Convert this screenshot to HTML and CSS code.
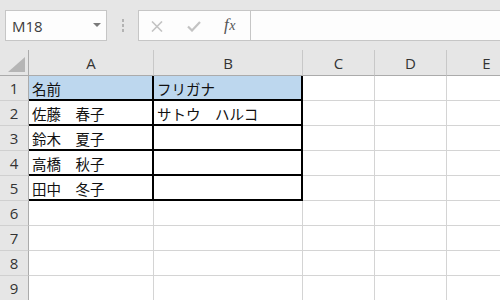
FILE: index.html
```html
<!DOCTYPE html>
<html lang="ja">
<head>
<meta charset="utf-8">
<link rel="stylesheet" href="styles.css">
</head>
<body>
<div class="app">
  <div class="toolbar">
    <div class="namebox">
      <span class="nametext">M18</span>
      <span class="caret"></span>
    </div>
    <div class="grip"><i></i><i></i><i></i></div>
    <div class="fbuttons">
      <svg class="ic-x" width="12" height="11" viewBox="0 0 12 11"><path d="M1 0.5 L11 10.5 M11 0.5 L1 10.5" stroke="#c3c3c3" stroke-width="1.6" fill="none"/></svg>
      <svg class="ic-ok" width="14" height="11" viewBox="0 0 14 11"><path d="M1 5.5 L5 9.5 L13 1" stroke="#c3c3c3" stroke-width="2.2" fill="none"/></svg>
      <span class="fx">f<span class="fxx">x</span></span>
    </div>
    <div class="finput"></div>
  </div>
  <div class="sheet">
    <div class="corner"><svg width="28" height="25" viewBox="0 0 28 25"><polygon points="25,7 25,22 8,22" fill="#b5b5b5"/></svg></div>
    <div class="ch">A</div><div class="ch">B</div><div class="ch">C</div><div class="ch">D</div><div class="ch">E</div>

    <div class="rh">1</div><div class="c hl bd">名前</div><div class="c hl bd">フリガナ</div><div class="c"></div><div class="c"></div><div class="c"></div>
    <div class="rh">2</div><div class="c bd">佐藤　春子</div><div class="c bd">サトウ　ハルコ</div><div class="c"></div><div class="c"></div><div class="c"></div>
    <div class="rh">3</div><div class="c bd">鈴木　夏子</div><div class="c bd"></div><div class="c"></div><div class="c"></div><div class="c"></div>
    <div class="rh">4</div><div class="c bd">高橋　秋子</div><div class="c bd"></div><div class="c"></div><div class="c"></div><div class="c"></div>
    <div class="rh">5</div><div class="c bd">田中　冬子</div><div class="c bd"></div><div class="c"></div><div class="c"></div><div class="c"></div>
    <div class="rh">6</div><div class="c"></div><div class="c"></div><div class="c"></div><div class="c"></div><div class="c"></div>
    <div class="rh">7</div><div class="c"></div><div class="c"></div><div class="c"></div><div class="c"></div><div class="c"></div>
    <div class="rh">8</div><div class="c"></div><div class="c"></div><div class="c"></div><div class="c"></div><div class="c"></div>
    <div class="rh">9</div><div class="c"></div><div class="c"></div><div class="c"></div><div class="c"></div><div class="c"></div>
  </div>
</div>
</body>
</html>
```
FILE: styles.css
```css
* { box-sizing: border-box; }
html, body { margin: 0; padding: 0; }
body {
  width: 500px;
  height: 300px;
  overflow: hidden;
  background: #e6e6e6;
  font-family: "Noto Sans", "Noto Sans CJK JP", sans-serif;
}
.app { width: 500px; height: 300px; overflow: hidden; }

.toolbar {
  height: 50px;
  display: flex;
  align-items: flex-start;
  padding: 10px 0 0 5px;
  background: #e6e6e6;
}
.namebox {
  width: 102px;
  height: 31px;
  background: #fdfdfd;
  border: 1px solid #c6c6c6;
  display: flex;
  align-items: center;
  justify-content: space-between;
  padding: 0 5px 0 6px;
}
.nametext {
  font-family: "Open Sans", "Noto Sans", sans-serif;
  font-size: 15px;
  color: #3c3c3c;
  margin-top: 1px;
}
.caret {
  width: 0; height: 0;
  border-left: 4px solid transparent;
  border-right: 4px solid transparent;
  border-top: 4px solid #7a7a7a;
  margin-top: -2px;
}
.grip {
  width: 31px;
  height: 31px;
  display: flex;
  flex-direction: column;
  align-items: center;
  justify-content: center;
  gap: 2px;
}
.grip i {
  display: block;
  width: 2px;
  height: 3px;
  background: #b3b3b3;
}
.fbuttons {
  width: 113px;
  height: 31px;
  background: #fdfdfd;
  border: 1px solid #c6c6c6;
  display: flex;
  align-items: center;
  padding: 0 0 0 12px;
}
.ic-x { margin-top: 2px; }
.ic-ok { margin-left: 24px; margin-top: 2px; }
.fx {
  margin-left: 23px;
  font-family: "Liberation Serif", "DejaVu Serif", serif;
  font-style: italic;
  font-size: 17px;
  color: #555;
  line-height: 1;
  margin-top: -2px;
  letter-spacing: 0.5px;
}
.fxx { font-size: 14px; }
.finput {
  flex: 1;
  height: 31px;
  background: #fdfdfd;
  border: 1px solid #c6c6c6;
  border-right: none;
  margin-left: -1px;
  margin-right: -20px;
}

.sheet {
  display: grid;
  grid-template-columns: 29px 125px 149px 72px 72px 80px;
  grid-template-rows: 26px;
  grid-auto-rows: 25px;
  background: #fff;
}
.corner {
  background: #e6e6e6;
  border-right: 1px solid #ababab;
  border-bottom: 1px solid #ababab;
}
.corner svg { display: block; }
.ch {
  background: #e6e6e6;
  border-right: 1px solid #c8c8c8;
  border-bottom: 1px solid #ababab;
  display: flex;
  align-items: center;
  justify-content: center;
  font-family: "Open Sans", "Noto Sans", sans-serif;
  font-size: 15px;
  color: #333;
  padding-top: 1px;
}
.rh {
  background: #e6e6e6;
  border-right: 1px solid #ababab;
  border-bottom: 1px solid #d0d0d0;
  display: flex;
  align-items: center;
  justify-content: center;
  font-family: "Open Sans", "Noto Sans", sans-serif;
  font-size: 15px;
  color: #333;
}
.c {
  background: #fff;
  border-right: 1px solid #d4d4d4;
  border-bottom: 1px solid #d4d4d4;
  display: flex;
  align-items: center;
  padding: 0 0 0 3px;
  font-family: "Noto Sans CJK JP", "Noto Sans", sans-serif;
  font-size: 14.5px;
  color: #111;
  white-space: nowrap;
  overflow: hidden;
}
.hl { background: #bdd7ee; }
.bd {
  border-right-color: #000;
  border-bottom-color: #000;
  box-shadow: inset -1px -1px 0 #000;
}
```
